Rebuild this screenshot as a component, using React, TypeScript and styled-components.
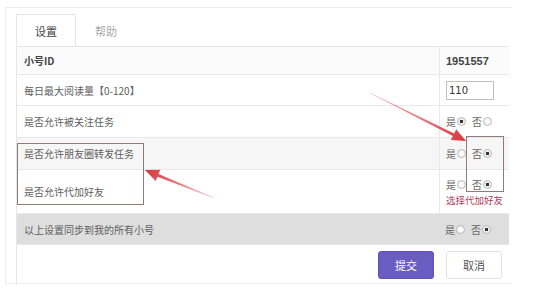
import styled, { createGlobalStyle } from 'styled-components';

const GlobalStyle = createGlobalStyle`
  html, body {
    margin: 0;
    padding: 0;
    background: #fff;
  }
  body {
    font-family: "Noto Sans CJK SC", "Liberation Sans", sans-serif;
    font-size: 10px;
    color: #555;
  }
`;

const Page = styled.div`
  position: relative;
  width: 548px;
  height: 295px;
  overflow: hidden;
`;

const Frame = styled.div`
  margin: 7px 0 0 5px;
  width: 507px;
  height: 277px;
  border-top: 1px solid #ececec;
  border-left: 1px solid #ececec;
  border-bottom: 1px solid #ececec;
  padding: 6px 0 0 10px;
  box-sizing: border-box;
`;

const Tabs = styled.div`
  display: flex;
  height: 32px;
`;

const Tab = styled.div<{ $active?: boolean }>`
  width: 60px;
  display: flex;
  align-items: center;
  justify-content: center;
  font-size: 11px;
  color: ${(p) => (p.$active ? '#444' : '#aaa')};
  background: #fff;
  border: 1px solid ${(p) => (p.$active ? '#e6e6e6' : 'transparent')};
  border-bottom: none;
  box-sizing: border-box;
`;

const Table = styled.div`
  width: 492px;
  border-left: 1px solid #e6e6e6;
  border-top: 1px solid #e6e6e6;
  height: 238px;
  display: flex;
  flex-direction: column;
`;

const Row = styled.div<{ $h: number; $bg?: string }>`
  display: grid;
  grid-template-columns: 422px 70px;
  height: ${(p) => p.$h}px;
  background: ${(p) => p.$bg || '#fff'};
  border-bottom: 1px solid #e9e9e9;
  box-sizing: border-box;
`;

const Label = styled.div<{ $bold?: boolean }>`
  display: flex;
  align-items: center;
  padding-left: 7px;
  font-size: 10px;
  font-weight: ${(p) => (p.$bold ? 700 : 400)};
  color: ${(p) => (p.$bold ? '#444' : '#5e5e5e')};
`;

const Value = styled.div<{ $bold?: boolean; $line?: boolean }>`
  display: flex;
  flex-direction: column;
  justify-content: center;
  padding-left: 6px;
  border-left: ${(p) => (p.$line ? '1px solid #e9e9e9' : 'none')};
  font-family: "Liberation Sans", "Noto Sans CJK SC", sans-serif;
  font-size: 11px;
  font-weight: ${(p) => (p.$bold ? 700 : 400)};
  color: #444;
`;

const NumInput = styled.div`
  width: 48px;
  height: 19px;
  border: 1px solid #bfbfbf;
  box-sizing: border-box;
  font-family: "DejaVu Sans", sans-serif;
  font-size: 10px;
  line-height: 17px;
  padding-left: 2px;
  color: #333;
`;

const Radios = styled.div`
  display: flex;
  align-items: center;
  gap: 6px;
  height: 16px;
`;

const RadioItem = styled.span`
  display: inline-flex;
  align-items: center;
  gap: 1px;
  font-family: "Noto Sans CJK SC", sans-serif;
  font-size: 10px;
  color: #666;
`;

const Dot = styled.span<{ $on?: boolean }>`
  width: 9px;
  height: 9px;
  border-radius: 50%;
  border: 1px solid #b8b8b8;
  box-sizing: border-box;
  background: radial-gradient(circle, ${(p) => (p.$on ? '#333 0 1.6px, #eee 2px' : '#fff 0, #eee 100%')});
`;

const Hint = styled.div`
  color: #b23a58;
  font-family: "Noto Sans CJK SC", sans-serif;
  font-size: 9.5px;
  line-height: 13px;
  white-space: nowrap;
  margin-top: 1px;
`;

const Footer = styled.div`
  display: flex;
  justify-content: flex-end;
  gap: 12px;
  width: 485px;
  margin-top: 6px;
`;

const Button = styled.div<{ $primary?: boolean }>`
  width: 56px;
  height: 28px;
  border-radius: 3px;
  display: flex;
  align-items: center;
  justify-content: center;
  box-sizing: border-box;
  font-size: 11px;
  background: ${(p) => (p.$primary ? '#6b5cc2' : '#fff')};
  color: ${(p) => (p.$primary ? '#fff' : '#555')};
  border: 1px solid ${(p) => (p.$primary ? '#5f51b5' : '#e2e2e2')};
`;

const Mark = styled.div<{ $x: number; $y: number; $w: number; $h: number }>`
  position: absolute;
  left: ${(p) => p.$x}px;
  top: ${(p) => p.$y}px;
  width: ${(p) => p.$w}px;
  height: ${(p) => p.$h}px;
  border: 1px solid #8c7c7c;
  box-sizing: border-box;
  pointer-events: none;
`;

const Arrows = styled.svg`
  position: absolute;
  left: 0;
  top: 0;
  pointer-events: none;
`;

const YesNo = ({ yes }: { yes: boolean }) => (
  <Radios>
    <RadioItem>
      是<Dot $on={yes} />
    </RadioItem>
    <RadioItem>
      否<Dot $on={!yes} />
    </RadioItem>
  </Radios>
);

export default function App() {
  return (
    <Page>
      <GlobalStyle />
      <Frame>
        <Tabs>
          <Tab $active>设置</Tab>
          <Tab>帮助</Tab>
        </Tabs>
        <Table>
          <Row $h={28} $bg="#fbfbfb">
            <Label $bold>小号ID</Label>
            <Value $bold $line>1951557</Value>
          </Row>
          <Row $h={31}>
            <Label>每日最大阅读量【0-120】</Label>
            <Value $line>
              <NumInput>110</NumInput>
            </Value>
          </Row>
          <Row $h={32}>
            <Label>是否允许被关注任务</Label>
            <Value $line>
              <YesNo yes />
            </Value>
          </Row>
          <Row $h={32} $bg="#f6f6f6">
            <Label>是否允许朋友圈转发任务</Label>
            <Value $line>
              <YesNo yes={false} />
            </Value>
          </Row>
          <Row $h={44}>
            <Label>是否允许代加好友</Label>
            <Value $line>
              <YesNo yes={false} />
              <Hint>选择代加好友</Hint>
            </Value>
          </Row>
          <Row $h={31} $bg="#dedede">
            <Label>以上设置同步到我的所有小号</Label>
            <Value>
              <YesNo yes={false} />
            </Value>
          </Row>
          <Footer>
            <Button $primary>提交</Button>
            <Button>取消</Button>
          </Footer>
        </Table>
      </Frame>

      <Mark $x={17} $y={143} $w={127} $h={62} />
      <Mark $x={466} $y={136} $w={38} $h={56} />

      <Arrows width="548" height="295" viewBox="0 0 548 295">
        <defs>
          <linearGradient id="a1" x1="370" y1="93" x2="466" y2="141" gradientUnits="userSpaceOnUse">
            <stop offset="0" stopColor="#d9363e" stopOpacity="0.3" />
            <stop offset="1" stopColor="#d9363e" />
          </linearGradient>
          <linearGradient id="a2" x1="214" y1="198" x2="145" y2="170" gradientUnits="userSpaceOnUse">
            <stop offset="0" stopColor="#d9363e" stopOpacity="0.3" />
            <stop offset="1" stopColor="#d9363e" />
          </linearGradient>
        </defs>
        <polygon
          fill="url(#a1)"
          points="369.9,93.3 452.8,136 450.8,140.1 466,141 456.2,129.3 454.2,133.4 370.1,92.7"
        />
        <polygon
          fill="url(#a2)"
          points="214.1,197.7 158.6,173.9 160.3,169.7 145,170 155.7,180.9 157.4,176.7 213.9,198.3"
        />
      </Arrows>
    </Page>
  );
}
